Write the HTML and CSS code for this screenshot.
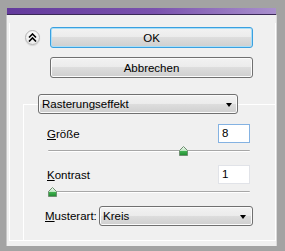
FILE: index.html
```html
<!DOCTYPE html>
<html lang="de">
<head>
    <meta charset="UTF-8">
    <meta name="viewport" content="width=device-width, initial-scale=1.0">
    <title>Rasterungseffekt</title>
    <link rel="stylesheet" href="styles.css">
</head>
<body>
    <div class="window">
        <div class="titlebar"></div>
        <div class="panel">
            <div class="etched">
                <div class="button-row">
                    <div class="collapse">
                        <svg width="9" height="9" viewBox="0 0 9 9">
                            <polyline points="1,4.5 4.5,1 8,4.5" fill="none" stroke="#000" stroke-width="1.6"/>
                            <polyline points="1,8.5 4.5,5 8,8.5" fill="none" stroke="#000" stroke-width="1.6"/>
                        </svg>
                    </div>
                    <div class="button focused">OK</div>
                </div>
                <div class="button cancel">Abbrechen</div>

                <div class="group">
                    <div class="dropdown effect">
                        <span>Rasterungseffekt</span>
                        <span class="arrow"></span>
                    </div>

                    <div class="field-row first">
                        <span class="label"><u>G</u>röße</span>
                        <div class="input active">8</div>
                    </div>
                    <div class="slider">
                        <div class="track"></div>
                        <svg class="thumb" style="left: 132px" width="9" height="10" viewBox="0 0 9 10">
                            <defs>
                                <linearGradient id="g1" x1="0" y1="0" x2="0" y2="1">
                                    <stop offset="0" stop-color="#f4fbf4"/>
                                    <stop offset="0.45" stop-color="#bfe6c2"/>
                                    <stop offset="0.55" stop-color="#3fb04f"/>
                                    <stop offset="1" stop-color="#1f8a30"/>
                                </linearGradient>
                            </defs>
                            <polygon points="4.5,0.5 8.5,4.5 8.5,9.5 0.5,9.5 0.5,4.5" fill="url(#g1)" stroke="#6f8f72"/>
                        </svg>
                    </div>

                    <div class="field-row">
                        <span class="label"><u>K</u>ontrast</span>
                        <div class="input">1</div>
                    </div>
                    <div class="slider">
                        <div class="track"></div>
                        <svg class="thumb" style="left: 1px" width="9" height="10" viewBox="0 0 9 10">
                            <polygon points="4.5,0.5 8.5,4.5 8.5,9.5 0.5,9.5 0.5,4.5" fill="url(#g1)" stroke="#6f8f72"/>
                        </svg>
                    </div>

                    <div class="field-row pattern">
                        <span class="label"><u>M</u>usterart:</span>
                        <div class="dropdown shape">
                            <span>Kreis</span>
                            <span class="arrow"></span>
                        </div>
                    </div>
                </div>
            </div>
        </div>
    </div>
</body>
</html>
```

FILE: styles.css
```css
body {
    margin: 0;
    background-color: #a3a3a3;
    font-family: "Liberation Sans", Arial, sans-serif;
    font-size: 11.5px;
    color: #000;
}
.window {
    margin: 8px 0 0 7px;
    width: 269px;
}
.titlebar {
    height: 6px;
    border-bottom: 1px solid #3a2956;
    background: linear-gradient(to right, #633a9c, #7a52ae 55%, #a990cd);
}
.panel {
    height: 231px;
    background-color: #f0f0f0;
    box-shadow: -1px 0 0 #c6c6c6, 1px 0 0 #d9d9d9, 0 1px 0 #e6e6e6;
    overflow: hidden;
}
.etched {
    margin: 8px 0 0 2px;
    height: 217px;
    border: 1px solid #fff;
    border-top: none;
}
.button-row {
    display: flex;
    align-items: center;
    padding-top: 4px;
}
.collapse {
    width: 13px;
    height: 13px;
    margin-left: 15px;
    border: 1px solid #b5b5b5;
    border-radius: 50%;
    background: radial-gradient(circle at 50% 35%, #ffffff, #ececec 70%, #dcdcdc);
    box-shadow: 0 1px 1px rgba(0,0,0,0.12);
    display: flex;
    align-items: center;
    justify-content: center;
}
.button {
    width: 201px;
    height: 19px;
    margin-left: 10px;
    border: 1px solid #707070;
    border-radius: 3px;
    background: linear-gradient(#f2f2f2 0%, #ebebeb 50%, #dddddd 50%, #cfcfcf 100%);
    box-shadow: inset 0 0 0 1px #fbfbfb;
    display: flex;
    align-items: center;
    justify-content: center;
}
.button.focused {
    border-color: #3aa0e0;
    box-shadow: inset 0 0 0 1px #a9def7;
}
.button.cancel {
    margin: 9px 0 0 40px;
}
.group {
    margin: 26px 0 0 13px;
    height: 136px;
    border-top: 1px solid #fff;
    border-left: 1px solid #fff;
}
.dropdown {
    height: 18px;
    border: 1px solid #707070;
    border-radius: 3px;
    background: linear-gradient(#f2f2f2 0%, #ebebeb 50%, #dddddd 50%, #cfcfcf 100%);
    box-shadow: inset 0 0 0 1px #fbfbfb;
    display: flex;
    align-items: center;
    justify-content: space-between;
    padding: 0 5px 0 3px;
}
.dropdown.effect {
    width: 190px;
    margin: -11px 0 0 14px;
}
.dropdown.shape {
    width: 143px;
    margin-left: auto;
    padding-right: 6px;
}
.arrow {
    width: 0;
    height: 0;
    border-left: 3.5px solid transparent;
    border-right: 3.5px solid transparent;
    border-top: 4px solid #000;
    margin-top: 1px;
}
.field-row {
    display: flex;
    align-items: center;
    justify-content: space-between;
    margin: 9px 25px 0 23px;
}
.field-row.first {
    margin-top: 10px;
}
.field-row.pattern {
    margin: 10px 22px 0 21px;
}
.label u {
    text-underline-offset: 1px;
}
.input {
    width: 27px;
    height: 17px;
    line-height: 17px;
    padding-left: 3px;
    background-color: #fff;
    border: 1px solid #e1e3e8;
}
.input.active {
    border-color: #84b2e2;
}
.slider {
    position: relative;
    height: 10px;
    margin: 3px 25px 0 23px;
}
.slider + .field-row {
    margin-top: 9px;
}
.field-row + .slider {
    margin-top: 3px;
}
.track {
    position: relative;
    top: 4px;
    margin-left: 1px;
    height: 0;
    border-top: 1px solid #a7a7a7;
    border-bottom: 1px solid #fff;
    border-radius: 1px;
}
.thumb {
    position: absolute;
    top: 0;
}
```
